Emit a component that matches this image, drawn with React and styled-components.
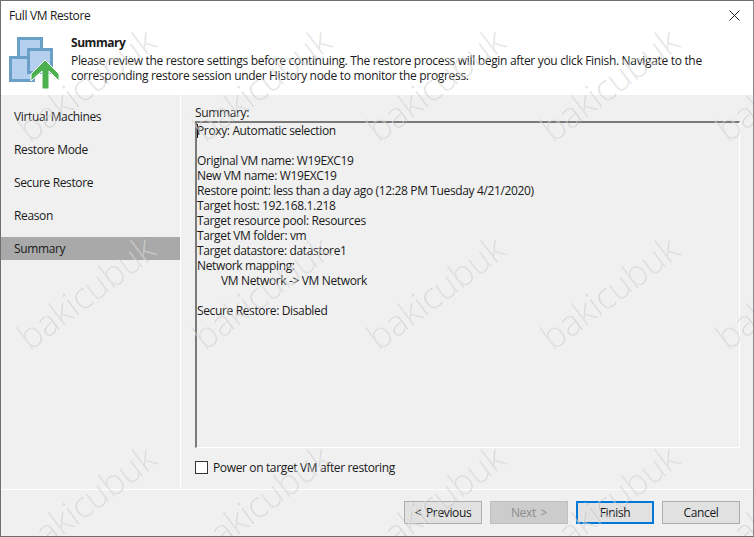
import styled, { createGlobalStyle } from "styled-components";

const GlobalStyle = createGlobalStyle`
  html, body {
    margin: 0;
    padding: 0;
    background: #f0f0f0;
  }
`;

const Window = styled.div`
  position: relative;
  width: 754px;
  height: 537px;
  box-sizing: border-box;
  border: 1px solid #6f6f6f;
  border-right-color: #8a8a8a;
  background: #f0f0f0;
  display: flex;
  flex-direction: column;
  overflow: hidden;
  font-family: "Open Sans", "Noto Sans", sans-serif;
  font-size: 12px;
  letter-spacing: -0.36px;
  color: #1a1a1a;
`;

const TitleBar = styled.div`
  height: 29px;
  display: flex;
  align-items: center;
  justify-content: space-between;
  padding: 0 13px 0 8px;
  background: #fff;
`;

const CloseButton = styled.svg`
  width: 11px;
  height: 11px;
`;

const Header = styled.div`
  height: 65px;
  background: #fff;
  display: flex;
  padding-left: 8px;
`;

const HeaderIcon = styled.svg`
  width: 52px;
  height: 54px;
  margin-top: 6px;
  flex-shrink: 0;
`;

const HeaderText = styled.div`
  margin-left: 10px;
  padding-top: 5px;
  line-height: 15px;
  letter-spacing: -0.32px;
`;

const HeaderTitle = styled.div`
  font-weight: 700;
  margin-bottom: 3px;
  letter-spacing: -0.45px;
`;

const Body = styled.div`
  flex: 1;
  display: flex;
  min-height: 0;
`;

const Sidebar = styled.div`
  width: 179px;
  padding-top: 10px;
  display: flex;
  flex-direction: column;
  gap: 10px;
  border-right: 1px solid #fff;
`;

const Step = styled.div`
  height: 23px;
  line-height: 23px;
  padding-left: 13px;
  background: ${({ $active }) => ($active ? "#a9a9a9" : "transparent")};
`;

const Content = styled.div`
  flex: 1;
  padding: 10px 13px 14px 14px;
  display: flex;
  flex-direction: column;
`;

const FieldLabel = styled.div`
  line-height: 16px;
`;

const SummaryBox = styled.div`
  height: 327px;
  box-sizing: border-box;
  border-top: 2px solid #7a7a7a;
  border-left: 2px solid #7a7a7a;
  border-right: 1px solid #fff;
  border-bottom: 1px solid #fff;
  line-height: 15px;
`;

const SummaryLine = styled.div`
  min-height: 15px;
  padding-left: ${({ $indent }) => ($indent ? "24px" : "0")};
`;

const Caret = styled.span`
  display: inline-block;
  width: 1px;
  height: 14px;
  margin-right: -1px;
  background: #111;
  vertical-align: -3px;
`;

const CheckRow = styled.label`
  display: flex;
  align-items: center;
  gap: 5px;
  margin-top: 12px;
  height: 15px;
`;

const CheckBox = styled.span`
  width: 11px;
  height: 11px;
  border: 1px solid #333;
  background: #fff;
`;

const Footer = styled.div`
  height: 47px;
  border-top: 1px solid #fff;
  display: flex;
  justify-content: flex-end;
  gap: 8px;
  padding: 11px 13px 0 0;
  box-sizing: border-box;
`;

const Button = styled.button`
  width: 78px;
  height: 23px;
  box-sizing: border-box;
  padding: 0;
  font: inherit;
  letter-spacing: inherit;
  word-spacing: 2px;
  color: ${({ disabled }) => (disabled ? "#8c8c8c" : "#1a1a1a")};
  background: ${({ disabled }) => (disabled ? "#cccccc" : "#e1e1e1")};
  border: ${({ $primary }) => ($primary ? "2px solid #0078d7" : "1px solid #adadad")};
  ${({ disabled }) => disabled && "border-color: #bfbfbf;"}
`;

const WatermarkLayer = styled.div`
  position: absolute;
  inset: 0;
  pointer-events: none;
  overflow: hidden;
`;

const Watermark = styled.span`
  position: absolute;
  transform: translate(-50%, -50%) rotate(-37deg);
  font-family: "Open Sans", sans-serif;
  font-size: 36px;
  font-weight: 300;
  color: rgba(255, 255, 255, 0.4);
  text-shadow: 0.6px 0.6px 0.6px rgba(120, 120, 120, 0.25);
  white-space: nowrap;
`;

const steps = ["Virtual Machines", "Restore Mode", "Secure Restore", "Reason", "Summary"];

const summary = [
  "Proxy: Automatic selection",
  "",
  "Original VM name: W19EXC19",
  "New VM name: W19EXC19",
  "Restore point: less than a day ago (12:28 PM Tuesday 4/21/2020)",
  "Target host: 192.168.1.218",
  "Target resource pool: Resources",
  "Target VM folder: vm",
  "Target datastore: datastore1",
  "Network mapping:",
  "VM Network -> VM Network",
  "",
  "Secure Restore: Disabled",
];

// watermark centres, read off the screenshot
const markX = [84, 259, 433, 607, 782];
const markY = [83, 291, 500];

const RestoreIcon = () => (
  <HeaderIcon viewBox="0 0 52 54">
    <rect x="9.5" y="2.5" width="23" height="23" fill="#b5cfee" stroke="#6aa0c8" strokeWidth="3" />
    <rect x="1.5" y="21.5" width="23" height="23" fill="#b5cfee" stroke="#6aa0c8" strokeWidth="3" />
    <rect x="19.5" y="13.5" width="23" height="23" fill="#b5cfee" stroke="#6aa0c8" strokeWidth="3" />
    <path d="M36 24 L50 38 V45 L40 35 V53 H33 V35 L22 45 V38 Z" fill="#4cb04f" stroke="#fff" strokeWidth="1" />
  </HeaderIcon>
);

const App = () => (
  <>
    <GlobalStyle />
    <Window>
      <TitleBar>
        <span>Full VM Restore</span>
        <CloseButton viewBox="0 0 11 11">
          <path d="M0.5 0.5 L10.5 10.5 M10.5 0.5 L0.5 10.5" stroke="#222" strokeWidth="1" fill="none" />
        </CloseButton>
      </TitleBar>
      <Header>
        <RestoreIcon />
        <HeaderText>
          <HeaderTitle>Summary</HeaderTitle>
          <div>Please review the restore settings before continuing. The restore process will begin after you click Finish. Navigate to the</div>
          <div>corresponding restore session under History node to monitor the progress.</div>
        </HeaderText>
      </Header>
      <Body>
        <Sidebar>
          {steps.map((step) => (
            <Step key={step} $active={step === "Summary"}>{step}</Step>
          ))}
        </Sidebar>
        <Content>
          <FieldLabel>Summary:</FieldLabel>
          <SummaryBox>
            {summary.map((line, i) => (
              <SummaryLine key={i} $indent={line.startsWith("VM Network")}>
                {i === 0 && <Caret />}
                {line}
              </SummaryLine>
            ))}
          </SummaryBox>
          <CheckRow>
            <CheckBox />
            Power on target VM after restoring
          </CheckRow>
        </Content>
      </Body>
      <Footer>
        <Button>&lt; Previous</Button>
        <Button disabled>Next &gt;</Button>
        <Button $primary>Finish</Button>
        <Button>Cancel</Button>
      </Footer>
      <WatermarkLayer>
        {markY.flatMap((y) =>
          markX.map((x) => (
            <Watermark key={`${x}-${y}`} style={{ left: x, top: y }}>bakicubuk</Watermark>
          ))
        )}
      </WatermarkLayer>
    </Window>
  </>
);

export default App;
